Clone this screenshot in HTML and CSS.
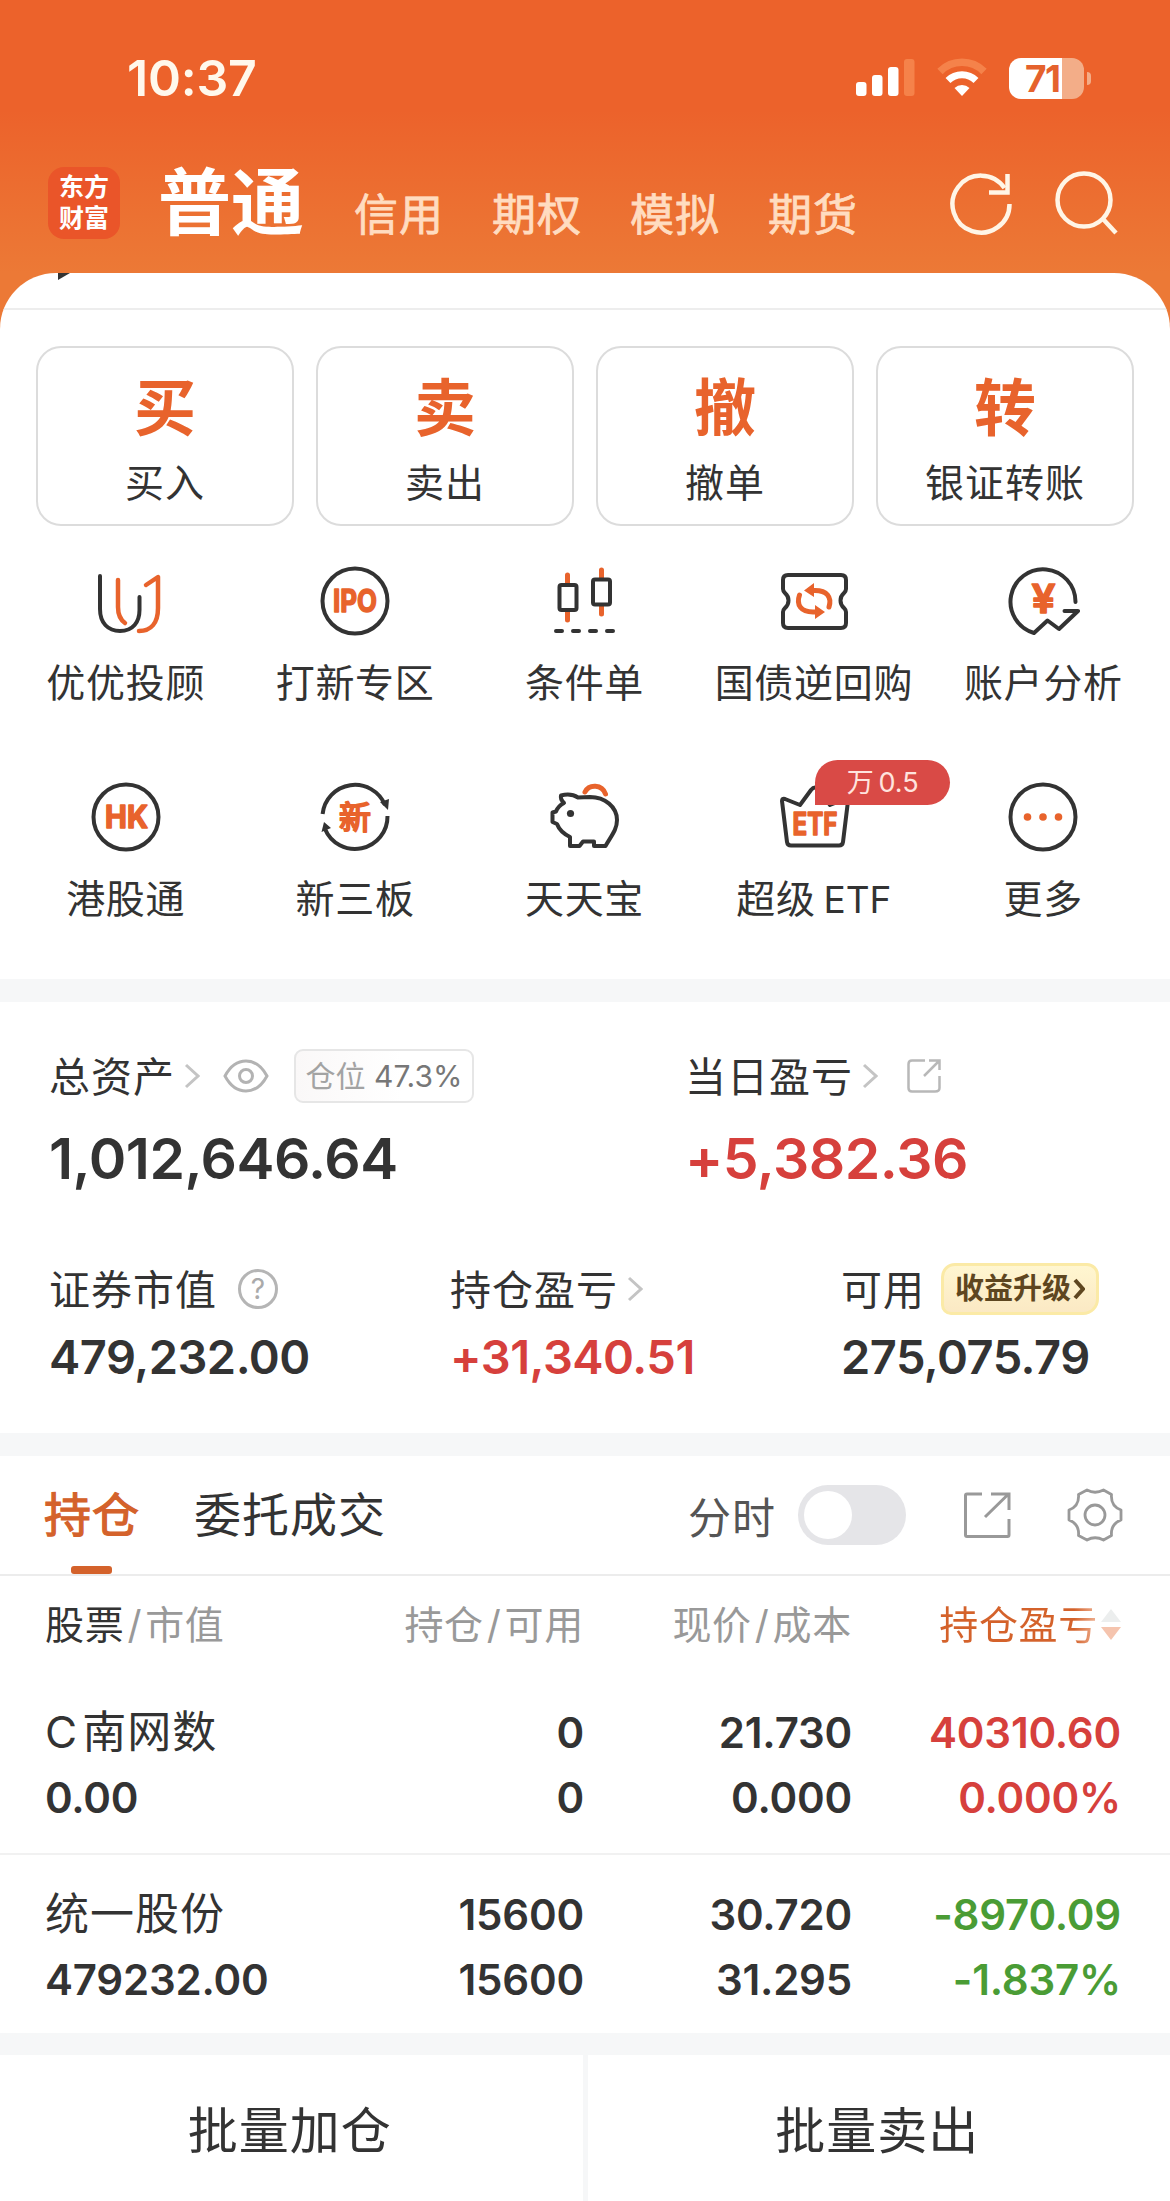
FILE: index.html
```html
<!DOCTYPE html>
<html lang="zh-CN">
<head>
    <meta charset="UTF-8">
    <meta name="viewport" content="width=device-width, initial-scale=1.0">
    <title>普通交易</title>
    <link rel="stylesheet" href="styles.css">
</head>
<body>
    <div class="top">
        <div class="status-bar">
            <span class="time">10:37</span>
            <svg class="signal" width="60" height="40" viewBox="0 0 60 40">
                <g fill="#fff">
                    <rect x="0" y="24" width="10.5" height="14" rx="3"/>
                    <rect x="16" y="17" width="10.5" height="21" rx="3"/>
                    <rect x="32" y="9" width="10.5" height="29" rx="3"/>
                    <rect x="48" y="1" width="10.5" height="37" rx="3" fill="#f5824a"/>
                </g>
            </svg>
            <svg class="wifi" width="50" height="40" viewBox="0 0 50 40">
                <path d="M3 13.5a31 31 0 0 1 44 0" fill="none" stroke="#f5824a" stroke-width="7.5"/>
                <path d="M11 22.5a20 20 0 0 1 28 0" fill="none" stroke="#fff" stroke-width="7"/>
                <path d="M25 38l-7.5-8a11 11 0 0 1 15 0z" fill="#fff"/>
            </svg>
            <div class="battery"><span>71</span></div>
            <i class="battery-tip"></i>
        </div>
        <div class="nav">
            <div class="logo">东方<br>财富</div>
            <div class="nav-current">普通</div>
            <div class="nav-links">
                <a>信用</a>
                <a>期权</a>
                <a>模拟</a>
                <a>期货</a>
            </div>
            <svg class="refresh" width="68" height="68" viewBox="0 0 68 68" fill="none" stroke="#fff5e6" stroke-width="4.5">
                <path d="M61.5 35A28.5 28.5 0 1 1 56.5 19"/>
                <path d="M59.5 5V23.5H41"/>
            </svg>
            <svg class="search" width="68" height="68" viewBox="0 0 68 68" fill="none" stroke="#fff5e6" stroke-width="4.5">
                <circle cx="30" cy="31" r="26.5"/>
                <path d="M49 50L62 64"/>
            </svg>
        </div>
        <div class="sheet">
            <div class="sheet-edge">
                <svg width="12" height="8" viewBox="0 0 12 8"><path d="M0 0H12L0 7z" fill="#333"/></svg>
            </div>
            <div class="actions">
                <div class="action"><b>买</b><span>买入</span></div>
                <div class="action"><b>卖</b><span>卖出</span></div>
                <div class="action"><b>撤</b><span>撤单</span></div>
                <div class="action"><b>转</b><span>银证转账</span></div>
            </div>
            <div class="menu">
                <div class="menu-item">
                    <svg viewBox="0 0 80 80">
                        <path class="ink" d="M14 15V48C14 62 22 70 34 70C47 70 53.5 61 53.5 49V36"/>
                        <path class="hot" d="M32 19V46Q32 57 39 62"/>
                        <path class="hot" d="M60 24L72 16V47C72 62 65 70 53 70"/>
                    </svg>
                    <span>优优投顾</span>
                </div>
                <div class="menu-item">
                    <svg viewBox="0 0 80 80">
                        <circle class="ink" cx="40" cy="40" r="32.5"/>
                        <text x="40" y="51" textLength="44" lengthAdjust="spacingAndGlyphs">IPO</text>
                    </svg>
                    <span>打新专区</span>
                </div>
                <div class="menu-item">
                    <svg viewBox="0 0 80 80">
                        <path class="hot thick" d="M23.5 14V22M23.5 50V59M57.5 9V17M57.5 45V53"/>
                        <rect class="ink" x="15.5" y="24" width="17" height="25" rx="2"/>
                        <rect class="ink" x="49" y="18.5" width="17" height="25" rx="2"/>
                        <path class="ink" d="M12 70H18M29 70H35M46 70H52M63 70H69"/>
                    </svg>
                    <span>条件单</span>
                </div>
                <div class="menu-item">
                    <svg viewBox="0 0 80 80">
                        <path class="ink" d="M14 14H67Q72 14 72 19V28Q72 30 70 32Q66.5 35 66.5 39.5Q66.5 44 70 47Q72 49 72 51V62Q72 67 67 67H14Q9 67 9 62V51Q9 49 11 47Q14.5 44 14.5 39.5Q14.5 35 11 32Q9 30 9 28V19Q9 14 14 14Z"/>
                        <path class="hot thick" d="M38 29.5H41C53 29.5 58 36 55 46"/>
                        <path class="hot thick" d="M43 51H39C27 51 22 44 25.5 34"/>
                        <path class="hot-fill" d="M30 29.5L40 22V36zM51 51L41 58V44z"/>
                    </svg>
                    <span>国债逆回购</span>
                </div>
                <div class="menu-item">
                    <svg viewBox="0 0 80 80">
                        <path class="ink" d="M72.5 41A32.5 32.5 0 1 0 31 72L44.5 59.5L56 68L75 50H61.5"/>
                        <text class="yuan" x="40.5" y="52" textLength="24" lengthAdjust="spacingAndGlyphs">¥</text>
                    </svg>
                    <span>账户分析</span>
                </div>
                <div class="menu-item">
                    <svg viewBox="0 0 80 80">
                        <circle class="ink" cx="40" cy="40" r="32.5"/>
                        <text x="40.5" y="51" textLength="43" lengthAdjust="spacingAndGlyphs">HK</text>
                    </svg>
                    <span>港股通</span>
                </div>
                <div class="menu-item">
                    <svg viewBox="0 0 80 80">
                        <path class="ink butt" d="M7.6 37A32.5 32.5 0 0 1 70 28"/>
                        <path class="ink butt" d="M72.500 39A32.5 32.5 0 0 1 10 52"/>
                        <path class="ink-fill" d="M65 25L74 22L73 33zM6.5 55L9 45L16 51z"/>
                        <text class="xin" x="40" y="51.5">新</text>
                    </svg>
                    <span>新三板</span>
                </div>
                <div class="menu-item">
                    <svg viewBox="0 0 80 80">
                        <path class="ink" d="M17 18.5Q27 16 34 20.5L46 20C61 20 73 30 73 43C73 53 67 59 61.5 69H50V64.5H39L35.5 69H26V60Q16 55 13 47L8.5 45V35.5L12 34.5Q14 29 20 26Q16 22 17 18.5Z"/>
                        <circle class="ink-fill" cx="26.5" cy="36.5" r="3.6"/>
                        <path class="hot thick" d="M41 15C45 7 58 7 61.500 17"/>
                    </svg>
                    <span>天天宝</span>
                </div>
                <div class="menu-item">
                    <svg viewBox="0 0 80 80">
                        <path class="ink" d="M13 65L8 24Q8 21 11 22L26 28L37 13Q41 8 45 13L56 28L71 22Q74 21 74 24L69 65Q68.5 68.5 65 68.5H17Q13.5 68.5 13 65Z"/>
                        <text x="41" y="58" textLength="45" lengthAdjust="spacingAndGlyphs">ETF</text>
                    </svg>
                    <em class="badge">万 0.5</em>
                    <span>超级 <small>ETF</small></span>
                </div>
                <div class="menu-item">
                    <svg viewBox="0 0 80 80">
                        <circle class="ink" cx="40" cy="40" r="32.5"/>
                        <g class="hot-fill">
                            <circle cx="24.5" cy="40" r="3.8"/>
                            <circle cx="40" cy="40" r="3.8"/>
                            <circle cx="55.5" cy="40" r="3.8"/>
                        </g>
                    </svg>
                    <span>更多</span>
                </div>
            </div>
        </div>
    </div>

    <div class="assets">
        <div class="asset-row main">
            <div class="asset">
                <div class="label">
                    <span>总资产</span>
                    <svg class="chevron" width="16" height="26" viewBox="0 0 16 26"><path d="M2 2L14 13L2 24"/></svg>
                    <svg class="eye" width="46" height="34" viewBox="0 0 46 34" fill="none" stroke="#b3b3b3" stroke-width="3">
                        <path d="M2 17Q10 2 23 2T44 17Q36 32 23 32T2 17Z"/>
                        <circle cx="23" cy="17" r="6.5"/>
                    </svg>
                    <div class="position"><i>仓位</i> 47.3%</div>
                </div>
                <div class="value">1,012,646.64</div>
            </div>
            <div class="asset">
                <div class="label">
                    <span>当日盈亏</span>
                    <svg class="chevron" width="16" height="26" viewBox="0 0 16 26"><path d="M2 2L14 13L2 24"/></svg>
                    <svg class="share-small" width="36" height="36" viewBox="0 0 36 36" fill="none" stroke="#b8b8b8" stroke-width="2.5">
                        <path d="M19 2.5H6Q2.5 2.5 2.5 6V30Q2.5 33.5 6 33.5H29Q33.5 33.5 33.5 30V18"/>
                        <path d="M18 18L33 3M23 2.5H33.5V12"/>
                    </svg>
                </div>
                <div class="value up">+5,382.36</div>
            </div>
        </div>
        <div class="asset-row sub">
            <div class="asset">
                <div class="label">
                    <span>证券市值</span>
                    <i class="help">?</i>
                </div>
                <div class="value">479,232.00</div>
            </div>
            <div class="asset">
                <div class="label">
                    <span>持仓盈亏</span>
                    <svg class="chevron" width="16" height="26" viewBox="0 0 16 26"><path d="M2 2L14 13L2 24"/></svg>
                </div>
                <div class="value up">+31,340.51</div>
            </div>
            <div class="asset">
                <div class="label">
                    <span>可用</span>
                    <div class="upgrade">收益升级<svg width="12" height="22" viewBox="0 0 12 22"><path d="M2 2L10 11L2 20" fill="none" stroke="#5e4620" stroke-width="4"/></svg></div>
                </div>
                <div class="value">275,075.79</div>
            </div>
        </div>
    </div>

    <div class="holdings">
        <div class="tabs">
            <div class="tab active">持仓</div>
            <div class="tab">委托成交</div>
            <div class="minute">分时</div>
            <div class="switch"></div>
            <svg class="share" width="48" height="48" viewBox="0 0 48 48" fill="none" stroke="#999" stroke-width="3">
                <path d="M19 3H4Q2.5 3 2.5 4.5V44Q2.5 45.5 4 45.5H44.5Q46 45.5 46 44V28"/>
                <path d="M22 26L45.5 3M28 3H46V19"/>
            </svg>
            <svg class="gear" width="56" height="54" viewBox="0 0 56 54" fill="none" stroke="#999" stroke-width="2.8">
                <path d="M20 2Q28 6.5 36.5 2L44.5 6.5Q43.5 18 54 22V32Q43.5 36 44.5 47.5L36.5 52Q28 47.5 20 52L11.5 47.5Q12.5 36 2 32V22Q12.5 18 11.5 6.5Z" stroke-linejoin="round"/>
                <circle cx="28" cy="27" r="10"/>
            </svg>
        </div>
        <div class="grid head">
            <div><span class="dark">股票</span><i>/</i>市值</div>
            <div>持仓<i>/</i>可用</div>
            <div>现价<i>/</i>成本</div>
            <div class="sorted"><span>持仓盈亏</span><svg width="20" height="32" viewBox="0 0 20 32"><path d="M10 0L20 13H0z" fill="#eceeee"/><path d="M0 18H20L10 31z" fill="#f5c4ae"/></svg></div>
        </div>
        <div class="grid stock">
            <div><span class="name">C<s></s>南网数</span><br>0.00</div>
            <div>0<br>0</div>
            <div>21.730<br>0.000</div>
            <div class="up">40310.60<br>0.000%</div>
        </div>
        <div class="grid stock">
            <div><span class="name">统一股份</span><br>479232.00</div>
            <div>15600<br>15600</div>
            <div>30.720<br>31.295</div>
            <div class="down">-8970.09<br>-1.837%</div>
        </div>
    </div>

    <div class="batch">
        <div>批量加仓</div>
        <div>批量卖出</div>
    </div>
</body>
</html>
```
FILE: styles.css
```css
* {
    margin: 0;
    padding: 0;
    box-sizing: border-box;
}

body {
    width: 1170px;
    height: 2201px;
    overflow: hidden;
    font-family: Inter, "Noto Sans CJK SC", sans-serif;
    color: #333;
    background-color: #f6f7f8;
}

i, em {
    font-style: normal;
}

svg {
    flex: none;
}

.up {
    color: #d6403c;
}

.down {
    color: #4a9c35;
}

/* header */
.top {
    height: 979px;
    background: linear-gradient(#ec622b 0, #ec622b 110px, #ec7936 273px, #ec7936 100%);
}

.status-bar {
    height: 136px;
    padding-top: 20px;
    padding-left: 127px;
    display: flex;
    align-items: center;
    color: #fff8ec;
}

.time {
    width: 729px;
    font-size: 50px;
    font-weight: 600;
    letter-spacing: -0.2px;
}

.wifi {
    margin-left: 21px;
}

.battery {
    width: 75px;
    height: 41px;
    margin-left: 22px;
    border-radius: 12px;
    background: linear-gradient(90deg, #fff 71%, #f3ad88 71%);
    color: #e5622d;
    font-size: 37px;
    line-height: 41px;
    font-weight: 700;
    letter-spacing: -1.5px;
    padding-left: 16px;
}

.battery-tip {
    width: 4px;
    height: 13px;
    margin-left: 3px;
    border-radius: 0 4px 4px 0;
    background-color: #f3ad88;
}

.nav {
    height: 137px;
    padding: 0 0 3px 48px;
    display: flex;
    align-items: center;
}

.logo {
    width: 72px;
    height: 72px;
    padding-top: 5px;
    border-radius: 16px;
    background-color: #ea5529;
    color: #fff;
    font-size: 25px;
    line-height: 31px;
    font-weight: 700;
    text-align: center;
}

.nav-current {
    width: 196px;
    margin-left: 38px;
    color: #fff;
    font-size: 73px;
    line-height: 90px;
    font-weight: 700;
}

.nav-links {
    width: 594px;
    padding-top: 17px;
    display: flex;
    gap: 48px;
    color: #ffdcc0;
    font-size: 44px;
    letter-spacing: 1px;
    -webkit-text-stroke: 0.8px #ffdcc0;
}

.search {
    margin-left: 38px;
}

.sheet {
    height: 706px;
    border-radius: 56px 56px 0 0;
    background-color: #fff;
    overflow: hidden;
}

.sheet-edge {
    height: 37px;
    padding-left: 58px;
    border-bottom: 2px solid #ededed;
    line-height: 0;
}

.actions {
    padding: 36px 36px 0;
    display: grid;
    grid-template-columns: repeat(4, 1fr);
    gap: 22px;
}

.action {
    height: 180px;
    padding-top: 19px;
    border: 2px solid #dcdcdc;
    border-radius: 25px;
    display: flex;
    flex-direction: column;
    align-items: center;
}

.action b {
    color: #e8632c;
    font-size: 62px;
    line-height: 84px;
}

.action span {
    font-size: 39px;
    line-height: 64px;
    letter-spacing: 1px;
}

.menu {
    padding: 35px 12px 0 11px;
    display: grid;
    grid-template-columns: repeat(5, 1fr);
    row-gap: 64px;
}

.menu-item {
    position: relative;
    display: flex;
    flex-direction: column;
    align-items: center;
    gap: 12px;
}

.menu-item svg {
    width: 80px;
    height: 80px;
}

.menu-item span {
    font-size: 39px;
    line-height: 60px;
    letter-spacing: 0.7px;
    word-spacing: -4px;
    white-space: nowrap;
}

.menu-item small {
    font-size: 37px;
    letter-spacing: 0;
}

.menu-item text {
    fill: #e8632c;
    stroke: #e8632c;
    stroke-width: 1.5;
    stroke-linejoin: round;
    font-size: 31px;
    font-weight: 700;
    text-anchor: middle;
}

.menu-item .yuan {
    font-size: 40px;
    font-weight: 600;
}

.menu-item .xin {
    stroke-width: 2;
    font-size: 32px;
    font-weight: 400;
}

.ink, .hot {
    fill: none;
    stroke: #333;
    stroke-width: 4;
    stroke-linecap: round;
    stroke-linejoin: round;
}

.hot {
    stroke: #e8632c;
    stroke-width: 4.5;
}

.thick {
    stroke-width: 5;
}

.butt {
    stroke-linecap: butt;
}

.ink-fill {
    fill: #333;
}

.hot-fill {
    fill: #e8632c;
}

.badge {
    position: absolute;
    top: -17px;
    left: 116px;
    width: 135px;
    height: 45px;
    border-radius: 23px 23px 23px 0;
    background-color: #d94a46;
    color: #ffe3de;
    font-size: 27px;
    line-height: 45px;
    word-spacing: -3px;
    text-align: center;
}

/* assets */
.assets {
    height: 431px;
    margin-top: 23px;
    padding-left: 49px;
    background-color: #fff;
}

.asset-row {
    display: grid;
}

.main {
    grid-template-columns: 636px 1fr;
    padding-top: 44px;
}

.sub {
    grid-template-columns: 401px 391px 1fr;
    padding-top: 60px;
}

.label {
    height: 60px;
    display: flex;
    align-items: center;
    font-size: 41px;
    letter-spacing: 1px;
}

.label span {
    margin-top: -5px;
}

.main .value {
    margin-top: 13px;
    font-size: 57px;
    line-height: 80px;
    font-weight: 600;
    letter-spacing: -0.5px;
}

.sub .value {
    margin-top: 8px;
    font-size: 47px;
    line-height: 60px;
    font-weight: 600;
    letter-spacing: -0.5px;
}

.chevron {
    margin-left: 9px;
    fill: none;
    stroke: #c4c4c4;
    stroke-width: 3;
}

.eye {
    margin-left: 23px;
}

.position {
    width: 180px;
    height: 54px;
    margin-left: 25px;
    border: 2px solid #e6e6e6;
    border-radius: 9px;
    background: linear-gradient(90deg, #faf8f8, #fff 60%);
    color: #777;
    font-size: 30px;
    line-height: 51px;
    letter-spacing: 0;
    text-align: center;
}

.position i {
    color: #a3a3a3;
}

.share-small {
    margin-left: 28px;
}

.help {
    width: 40px;
    height: 40px;
    margin-left: 21px;
    border: 3px solid #b5b5b5;
    border-radius: 50%;
    color: #aaa;
    font-size: 28px;
    line-height: 34px;
    letter-spacing: 0;
    text-align: center;
}

.upgrade {
    width: 158px;
    height: 52px;
    margin-left: 16px;
    border: 3px solid #fbeaa6;
    border-radius: 14px 12px 16px 10px;
    background: linear-gradient(#fff6d0, #fbe9c4);
    display: flex;
    align-items: center;
    justify-content: center;
    gap: 2px;
    color: #5e4620;
    font-size: 29px;
    line-height: 42px;
    font-weight: 700;
    letter-spacing: 0;
}

/* holdings */
.holdings {
    margin-top: 23px;
    background-color: #fff;
}

.tabs {
    height: 120px;
    padding-left: 44px;
    border-bottom: 2px solid #ececec;
    display: flex;
    align-items: center;
    font-size: 47px;
    letter-spacing: 1px;
}

.tab {
    position: relative;
    width: 150px;
    line-height: 118px;
}

.tab + .tab {
    width: 494px;
}

.active {
    color: #d4622b;
    -webkit-text-stroke: 1.2px #d4622b;
}

.active::after {
    content: "";
    position: absolute;
    left: 27px;
    bottom: 0;
    width: 41px;
    height: 8px;
    border-radius: 3px;
    background-color: #d4622b;
}

.minute {
    width: 110px;
    color: #555;
    font-size: 43px;
}

.switch {
    width: 108px;
    height: 60px;
    padding: 6px;
    border-radius: 30px;
    background-color: #e5e5e8;
}

.switch::before {
    content: "";
    display: block;
    width: 48px;
    height: 48px;
    border-radius: 50%;
    background-color: #fff;
}

.share {
    margin-left: 57px;
}

.gear {
    margin-left: 56px;
}

.grid {
    padding: 0 49px 0 45px;
    display: grid;
    grid-template-columns: 300px 239px 268px 269px;
    text-align: right;
}

.grid div:first-child {
    text-align: left;
}

.head {
    height: 97px;
    color: #999;
    font-size: 39px;
    line-height: 97px;
    letter-spacing: 0.7px;
}

.head i {
    margin: 0 3px;
}

.dark {
    color: #333;
}

.sorted {
    display: flex;
    align-items: center;
    justify-content: flex-end;
    gap: 3px;
}

.sorted span {
    background: linear-gradient(90deg, #d4622b 85%, #f0b598);
    background-clip: text;
    color: transparent;
}

.stock {
    height: 180px;
    padding-top: 27px;
    font-size: 42px;
    line-height: 65px;
    font-weight: 600;
    letter-spacing: -0.2px;
}

.stock + .stock {
    border-top: 2px solid #f1f1f1;
}

.name {
    font-size: 44px;
    font-weight: 400;
    letter-spacing: 1px;
}

.name s {
    display: inline-block;
    width: 4px;
}

/* footer */
.batch {
    margin-top: 22px;
    display: grid;
    grid-template-columns: 1fr 1fr;
    gap: 5px;
}

.batch div {
    padding-right: 3px;
    background-color: #fff;
    font-size: 50px;
    line-height: 153px;
    letter-spacing: 1px;
    text-align: center;
}
```
